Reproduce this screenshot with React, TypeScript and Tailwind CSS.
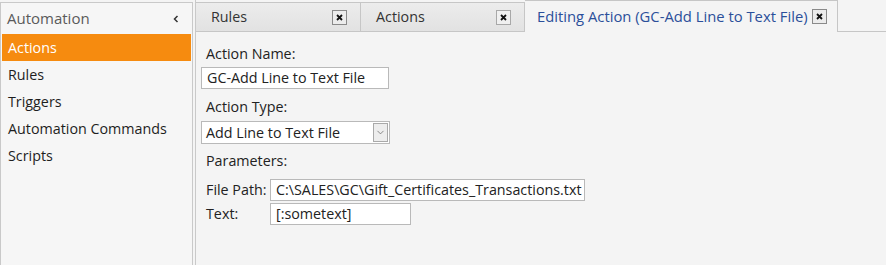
import { ChevronDown } from 'lucide-react';

const navItems = ['Actions', 'Rules', 'Triggers', 'Automation Commands', 'Scripts'];

function CloseBox({ active }: { active?: boolean }) {
  return (
    <span
      className={`flex h-[15px] w-[15px] items-center justify-center border ${
        active ? 'border-[#8a8a8a] bg-[#ececec]' : 'border-[#a8a8a8] bg-[#f0f0f0]'
      }`}
    >
      <svg width="7" height="7" viewBox="0 0 7 7">
        <path d="M1 1L6 6M6 1L1 6" stroke="#111" strokeWidth="1.8" />
      </svg>
    </span>
  );
}

export default function App() {
  return (
    <div
      className="flex h-[265px] w-[886px] overflow-hidden bg-[#f4f4f4] text-[14.3px] text-[#222]"
      style={{ fontFamily: '"Open Sans", "Noto Sans", sans-serif' }}
    >
      {/* Sidebar */}
      <div className="mt-[2px] flex w-[193px] shrink-0 flex-col border-l border-r border-t border-[#c9c9c9] bg-[#f6f6f6]">
        <div className="flex h-[31px] items-center justify-between pl-[6px] pr-[13px]">
          <span className="text-[15px] text-[#5a5a5a]">Automation</span>
          <svg width="6" height="8" viewBox="0 0 6 8">
            <path d="M4.5 1L1.5 4L4.5 7" stroke="#333" strokeWidth="1.5" fill="none" />
          </svg>
        </div>
        <div className="flex flex-col">
          {navItems.map((item, i) => (
            <div
              key={item}
              className={`mx-[1px] flex h-[27px] items-center pl-[6px] ${
                i === 0 ? 'bg-[#f68b0f] text-white' : 'text-[#1e1e1e]'
              }`}
            >
              {item}
            </div>
          ))}
        </div>
      </div>

      {/* Main */}
      <div className="ml-[2px] flex flex-1 flex-col border-l border-[#c9c9c9]">
        {/* Tabs */}
        <div className="flex h-[32px] items-end">
          <div className="flex h-[30px] w-[165px] items-center justify-between border-r border-t border-b border-[#c6c6c6] bg-gradient-to-b from-[#ececec] to-[#e2e2e2] pl-[15px] pr-[13px]">
            <span className="text-[#333]">Rules</span>
            <CloseBox active />
          </div>
          <div className="flex h-[30px] w-[164px] items-center justify-between border-r border-t border-b border-[#c6c6c6] bg-gradient-to-b from-[#ececec] to-[#e2e2e2] pl-[15px] pr-[13px]">
            <span className="text-[#333]">Actions</span>
            <CloseBox />
          </div>
          <div className="flex h-[32px] items-center gap-[4px] border-r border-t border-[#c6c6c6] bg-[#f4f4f4] pl-[12px] pr-[10px]">
            <span className="text-[14.8px] text-[#2b4f9a]">Editing Action (GC-Add Line to Text File)</span>
            <CloseBox active />
          </div>
          <div className="flex-1 border-b border-[#c6c6c6]" />
        </div>

        {/* Form */}
        <div className="flex flex-col pl-[5px] pt-[12px]">
          <div className="pl-[5px] leading-[19px]">Action Name:</div>
          <div className="mt-[4px] flex h-[22px] w-[188px] items-center border border-[#b9b9b9] bg-white pl-[5px]">
            GC-Add Line to Text File
          </div>
          <div className="mt-[8px] pl-[5px] leading-[19px]">Action Type:</div>
          <div className="mt-[5px] flex h-[23px] w-[189px] items-center justify-between border border-[#b9b9b9] bg-white pl-[4px] pr-[1px]">
            <span>Add Line to Text File</span>
            <span className="flex h-[19px] w-[15px] items-center justify-center border border-[#a9a9a9] bg-[#ededed]">
              <ChevronDown size={11} strokeWidth={1.6} className="text-[#666]" />
            </span>
          </div>
          <div className="mt-[7px] pl-[5px] leading-[19px]">Parameters:</div>
          <div className="mt-[9px] flex items-center">
            <span className="w-[69px] pl-[5px]">File Path:</span>
            <div className="flex h-[22px] w-[315px] items-center border border-[#b9b9b9] bg-white pl-[5px]">
              C:\SALES\GC\Gift_Certificates_Transactions.txt
            </div>
          </div>
          <div className="mt-[2px] flex items-center">
            <span className="w-[69px] pl-[5px]">Text:</span>
            <div className="flex h-[22px] w-[141px] items-center border border-[#b9b9b9] bg-white pl-[5px]">
              [:sometext]
            </div>
          </div>
        </div>
      </div>
    </div>
  );
}
